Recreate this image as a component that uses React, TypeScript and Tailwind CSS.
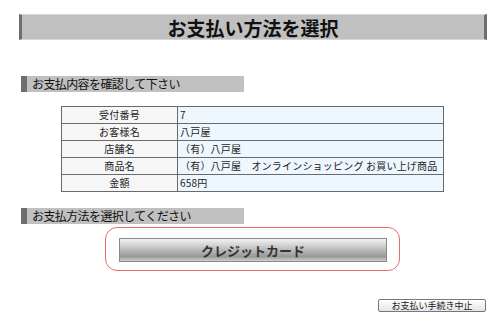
import React from 'react';

const rows: [string, string][] = [
  ['受付番号', '7'],
  ['お客様名', '八戸屋'],
  ['店舗名', '（有）八戸屋'],
  ['商品名', '（有）八戸屋　オンラインショッピング お買い上げ商品'],
  ['金額', '658円'],
];

const SectionHeader = ({ label }: { label: string }) => (
  <div className="ml-[21px] flex h-[16px] w-[223px] items-center bg-[#c0c0c0]">
    <div className="h-full w-[6px] bg-[#6e6e6e]"></div>
    <span className="ml-[5px] text-[12px] leading-none tracking-[-0.6px] text-[#111]">{label}</span>
  </div>
);

const App = () => {
  return (
    <div
      className="flex h-[331px] w-[500px] flex-col bg-white pt-[14px]"
      style={{ fontFamily: '"Noto Sans CJK JP", "Noto Sans", sans-serif' }}
    >
      {/* Title bar */}
      <div className="ml-[19px] flex h-[26px] w-[468px] items-center justify-center border-x-[3px] border-x-[#6e6e6e] border-y border-y-[#d8d8d8] bg-[#c0c0c0]">
        <h1 className="text-[19px] font-bold leading-none text-[#111]">お支払い方法を選択</h1>
      </div>

      <div className="mt-[36px]">
        <SectionHeader label="お支払内容を確認して下さい" />
      </div>

      <table className="ml-[61px] mt-[14px] w-[383px] table-fixed border-collapse text-[10px] leading-none tracking-[0.2px] text-[#222]">
        <colgroup>
          <col className="w-[116px]" />
          <col />
        </colgroup>
        <tbody>
          {rows.map(([k, v]) => (
            <tr key={k} className="h-[17px]">
              <td className="border border-[#6a6a6a] bg-[#f6f6f6] text-center">{k}</td>
              <td className="border border-[#6a6a6a] bg-[#eef6fe] pl-[2px] whitespace-nowrap">{v}</td>
            </tr>
          ))}
        </tbody>
      </table>

      <div className="mt-[16px]">
        <SectionHeader label="お支払方法を選択してください" />
      </div>

      {/* Payment choice */}
      <div className="ml-[105px] mt-[3px] h-[44px] w-[295px] rounded-[12px] border border-[#f06666] pl-[13px] pt-[10px]">
        <button className="flex h-[24px] w-[268px] items-center justify-center border border-[#8a8a8a] bg-[linear-gradient(to_bottom,#f2f2f2_0%,#d6d6d6_25%,#b4b4b4_55%,#999_80%,#cfcfcf_100%)] text-[13px] font-bold leading-none text-[#333]">
          クレジットカード
        </button>
      </div>

      <div className="mt-[28px] flex justify-end pr-[14px]">
        <button className="flex h-[13px] w-[108px] items-center justify-center rounded-[2px] border border-[#6a7a8a] bg-[linear-gradient(to_bottom,#ffffff,#e4e4e4)] text-[9px] leading-none text-[#222]">
          お支払い手続き中止
        </button>
      </div>
    </div>
  );
};

export default App;
